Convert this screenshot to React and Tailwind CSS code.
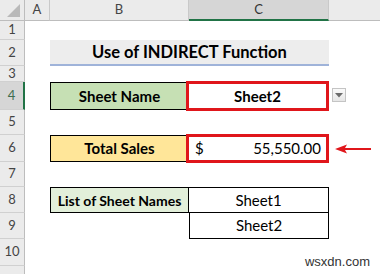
import React from "react";

const font = { fontFamily: "Lato, 'Open Sans', sans-serif" };

function ColHead({ label, active }) {
  return (
    <div
      className={`flex items-center justify-center border-r border-[#c9c9c9] text-[13px] ${
        active
          ? "bg-[#d6d6d6] border-b-2 border-b-[#217346] text-[#333]"
          : "bg-[#ebebeb] border-b border-b-[#bdbdbd] text-[#444]"
      }`}
    >
      {label}
    </div>
  );
}

function RowHead({ n, active }) {
  return (
    <div
      className={`flex items-center justify-center border-b border-[#d0d0d0] text-[13px] ${
        active
          ? "bg-[#d6d6d6] border-r-2 border-r-[#217346] text-[#3f6e50]"
          : "bg-[#ebebeb] border-r border-r-[#bdbdbd] text-[#444]"
      }`}
    >
      {n}
    </div>
  );
}

export default function App() {
  const rows = [19, 26, 16, 28, 25, 27, 25, 26, 26, 27, 20];
  return (
    <div className="relative h-[274px] w-[380px] overflow-hidden bg-white" style={font}>
      <div
        className="grid"
        style={{
          gridTemplateColumns: "25px 25px 139px 140px 51px",
          gridTemplateRows: ["21px", ...rows.map((h) => `${h}px`)].join(" "),
        }}
      >
        {/* header row */}
        <div className="relative border-r border-b border-[#bdbdbd] bg-[#ebebeb]">
          <svg className="absolute bottom-[3px] right-[4px]" width="13" height="13">
            <polygon points="13,0 13,13 0,13" fill="#b9b9b9" />
          </svg>
        </div>
        <ColHead label="A" />
        <ColHead label="B" />
        <ColHead label="C" active />
        <div className="border-b border-b-[#bdbdbd] bg-[#ebebeb]" />

        {/* row 1 */}
        <RowHead n={1} />
        <div className="col-span-4" />

        {/* row 2 */}
        <RowHead n={2} />
        <div />
        <div className="col-span-2 flex items-center justify-center border-b-2 border-[#9fb3d9] bg-[#ededed] text-[16.5px] font-bold text-black">
          Use of INDIRECT Function
        </div>
        <div />

        {/* row 3 */}
        <RowHead n={3} />
        <div className="col-span-4" />

        {/* row 4 */}
        <RowHead n={4} active />
        <div />
        <div className="flex items-center justify-center border border-black bg-[#c6e0b4] text-[15px] font-bold text-black">
          Sheet Name
        </div>
        <div className="-my-px -ml-[3px] flex items-center justify-center border-[3px] border-[#e0161b] bg-white text-[15px] font-bold text-black">
          Sheet2
        </div>
        <div className="flex items-start pl-[3px] pt-[6px]">
          <div className="flex h-[14px] w-[14px] items-center justify-center border border-[#c4c4c4] bg-gradient-to-b from-[#fafafa] to-[#e6e6e6]">
            <svg width="8" height="5">
              <polygon points="0,0 8,0 4,4.5" fill="#6b6b6b" />
            </svg>
          </div>
        </div>

        {/* row 5 */}
        <RowHead n={5} />
        <div className="col-span-4" />

        {/* row 6 */}
        <RowHead n={6} />
        <div />
        <div className="flex items-center justify-center border border-black bg-[#ffe699] text-[15px] font-bold text-black">
          Total Sales
        </div>
        <div className="-my-px -ml-[3px] flex items-center justify-between border-[3px] border-[#e0161b] bg-white pl-[6px] pr-[5px] text-[15px] text-black">
          <span>$</span>
          <span>55,550.00</span>
        </div>
        <div className="flex items-center pl-[6px]">
          <svg width="36" height="10">
            <polygon points="0,5 12,0.5 10,4 36,4 36,6 10,6 12,9.5" fill="#e0161b" />
          </svg>
        </div>

        {/* row 7 */}
        <RowHead n={7} />
        <div className="col-span-4" />

        {/* row 8 */}
        <RowHead n={8} />
        <div />
        <div className="flex items-center justify-center border border-black bg-[#e2efda] text-[14px] font-bold text-black">
          List of Sheet Names
        </div>
        <div className="flex items-center justify-center border-y border-r border-black text-[15px] text-black">
          Sheet1
        </div>
        <div />

        {/* row 9 */}
        <RowHead n={9} />
        <div />
        <div />
        <div className="flex items-center justify-center border-x border-b border-black text-[15px] text-black">
          Sheet2
        </div>
        <div />

        {/* row 10 */}
        <RowHead n={10} />
        <div />
        <div />
        <div className="relative">
          <span
            className="absolute -right-[41px] top-[16px] text-[13px] leading-none text-[#333]"
            style={{ fontFamily: "'Liberation Sans', Arial, sans-serif" }}
          >
            wsxdn.com
          </span>
        </div>
        <div />

        {/* row 11 */}
        <RowHead n="" />
        <div className="col-span-4" />
      </div>
    </div>
  );
}
